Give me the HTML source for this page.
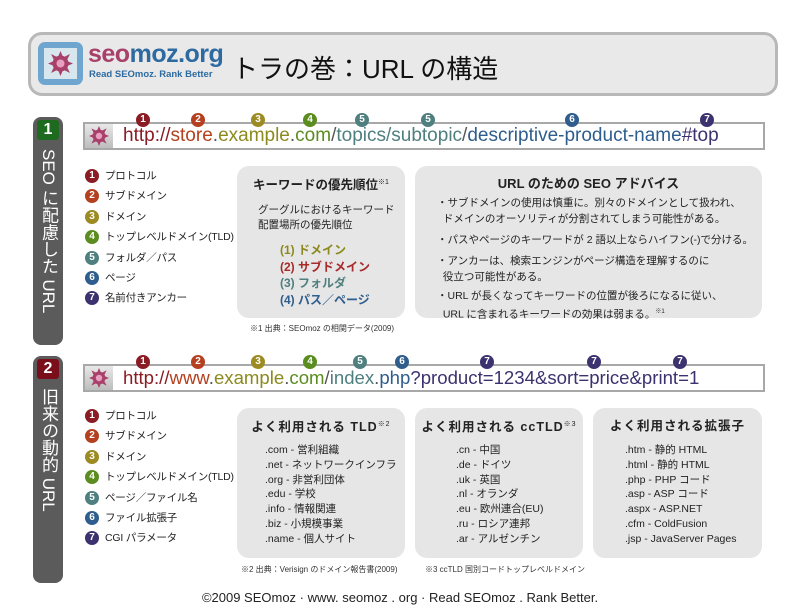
<!DOCTYPE html>
<html><head><meta charset="utf-8"><style>
*{margin:0;padding:0;box-sizing:border-box}
body{width:800px;height:610px;background:#fff;position:relative;overflow:hidden;font-family:"Liberation Sans","Noto Sans CJK JP",sans-serif;color:#222}
.a{position:absolute}
.hdr{left:28px;top:32px;width:750px;height:64px;border:3px solid #b8b8b8;border-radius:14px;background:#e9e9e9}
.logo{left:38px;top:42px;width:45px;height:43px;background:#6ea6cf;border-radius:7px}
.logo i{position:absolute;left:6px;top:6px;width:33px;height:31px;background:#d8e6ee}
.side{width:30px;border-radius:8px;background:#5b5b5b}
.badge{position:absolute;left:4px;top:3px;width:22px;height:20px;color:#fff;font-weight:bold;font-size:16px;text-align:center;line-height:20px;border-radius:3px}
.vt{position:absolute;left:5px;top:32px;writing-mode:vertical-rl;color:#fff;font-size:17px;line-height:20px}
.bar{left:83px;width:682px;height:28px;border:2px solid #a8a8a8;background:#fff}
.bar .ic{position:absolute;left:0;top:0;width:28px;height:24px;background:linear-gradient(#e8e8e8,#bdbdbd)}
.url{position:absolute;left:38px;top:0;font-size:19px;line-height:24px;white-space:nowrap;color:#555}
.n{position:absolute;width:14px;height:14px;border-radius:50%;color:#fff;font-size:10px;font-weight:bold;text-align:center;line-height:14px}
.c1{background:#8a1c24}.c2{background:#b4401f}.c3{background:#9c8a22}.c4{background:#5b8c1f}.c5{background:#4f7f7f}.c6{background:#2f5d8d}.c7{background:#3b326f}
.t1{color:#8a1c24}.t2{color:#b4401f}.t3{color:#8c8a1e}.t4{color:#5b8c1f}.t5{color:#4f7f7f}.t6{color:#2f5d8d}.t7{color:#3b326f}
.leg{left:85px;font-size:10.5px;letter-spacing:-0.2px}
.leg div{height:20.4px;position:relative;padding-left:20px;line-height:14px;white-space:nowrap}
.leg .n{left:0;top:0;letter-spacing:0}
.box{background:#e6e6e6;border-radius:12px}
.box h4{font-size:13px;text-align:center;font-weight:bold}
.fn{font-size:8px;color:#333}
.lst{font-size:10.5px;line-height:14.8px}
</style></head><body>
<div class="a hdr"></div>
<div class="a logo"><i></i><svg style="position:absolute;left:10px;top:9px" width="25" height="25" viewBox="0 0 25 25"><g fill="#a8406a"><circle cx="12.5" cy="12.5" r="8"/><path d="M12.5 0L15 6 10 6zM12.5 25L15 19 10 19zM0 12.5L6 10 6 15zM25 12.5L19 10 19 15zM3 3L9 6 6 9zM22 22L16 19 19 16zM22 3L19 9 16 6zM3 22L6 16 9 19z"/></g><circle cx="12.5" cy="12.5" r="4" fill="#e9a0c0"/></svg></div>
<div class="a" style="left:88px;top:40px;font-size:25px;font-weight:bold;color:#2d6aa0;letter-spacing:-0.5px"><span style="color:#a8406a">seo</span>moz.org</div>
<div class="a" style="left:89px;top:69px;font-size:9.5px;font-weight:bold;color:#2d6aa0">Read SEOmoz. Rank Better</div>
<div class="a" style="left:232px;top:49px;font-size:26px;color:#111">トラの巻：URL の構造</div>

<!-- section 1 -->
<div class="a side" style="left:33px;top:117px;height:228px"><div class="badge" style="background:#1e6a1e">1</div><div class="vt">SEO に配慮した URL</div></div>
<div class="a bar" style="top:122px"><div class="ic"></div><svg class="a" style="left:4px;top:2px" width="20" height="20" viewBox="0 0 25 25"><g fill="#a8406a"><circle cx="12.5" cy="12.5" r="8"/><path d="M12.5 0L15 6 10 6zM12.5 25L15 19 10 19zM0 12.5L6 10 6 15zM25 12.5L19 10 19 15zM3 3L9 6 6 9zM22 22L16 19 19 16zM22 3L19 9 16 6zM3 22L6 16 9 19z"/></g><circle cx="12.5" cy="12.5" r="4" fill="#e9a0c0"/></svg>
<div class="url"><span class="t1">http://</span><span class="t2">store</span>.<span class="t3">example</span>.<span class="t4">com</span>/<span class="t5">topics/subtopic</span>/<span class="t6">descriptive-product-name</span><span class="t7">#top</span></div></div>
<div class="n c1" style="left:136px;top:113px">1</div><div class="n c2" style="left:191px;top:113px">2</div><div class="n c3" style="left:251px;top:113px">3</div><div class="n c4" style="left:303px;top:113px">4</div><div class="n c5" style="left:355px;top:113px">5</div><div class="n c5" style="left:421px;top:113px">5</div><div class="n c6" style="left:565px;top:113px">6</div><div class="n c7" style="left:700px;top:113px">7</div>

<div class="a leg" style="top:169px">
<div><span class="n c1">1</span>プロトコル</div><div><span class="n c2">2</span>サブドメイン</div><div><span class="n c3">3</span>ドメイン</div><div><span class="n c4">4</span>トップレベルドメイン(TLD)</div><div><span class="n c5">5</span>フォルダ／パス</div><div><span class="n c6">6</span>ページ</div><div><span class="n c7">7</span>名前付きアンカー</div></div>

<div class="a box" style="left:237px;top:166px;width:168px;height:152px">
<h4 style="margin-top:8px;font-size:12.5px">キーワードの優先順位<sup style="font-size:7px;font-weight:normal">※1</sup></h4>
<div style="margin:10px 0 0 21px;font-size:10.5px;line-height:15px">グーグルにおけるキーワード<br>配置場所の優先順位</div>
<div style="margin:9px 0 0 43px;font-size:12px;font-weight:bold;line-height:16.5px"><div class="t3">(1) ドメイン</div><div class="t1" style="color:#a82a2a">(2) サブドメイン</div><div class="t5">(3) フォルダ</div><div class="t6">(4) パス／ページ</div></div></div>
<div class="a fn" style="left:250px;top:323px">※1 出典：SEOmoz の相関データ(2009)</div>

<div class="a box" style="left:415px;top:166px;width:347px;height:152px">
<h4 style="margin-top:7px">URL のための SEO アドバイス</h4>
<div style="margin:3px 0 0 22px;font-size:10.5px;line-height:16px">
<div>・サブドメインの使用は慎重に。別々のドメインとして扱われ、<br>&nbsp;&nbsp;ドメインのオーソリティが分割されてしまう可能性がある。</div>
<div style="margin-top:5px">・パスやページのキーワードが 2 語以上ならハイフン(-)で分ける。</div>
<div style="margin-top:5px">・アンカーは、検索エンジンがページ構造を理解するのに<br>&nbsp;&nbsp;役立つ可能性がある。</div>
<div style="margin-top:3px">・URL が長くなってキーワードの位置が後ろになるに従い、<br>&nbsp;&nbsp;URL に含まれるキーワードの効果は弱まる。<sup style="font-size:6px">※1</sup></div></div></div>

<!-- section 2 -->
<div class="a side" style="left:33px;top:356px;height:227px"><div class="badge" style="background:#7a0e1a">2</div><div class="vt">旧来の動的 URL</div></div>
<div class="a bar" style="top:364px"><div class="ic"></div><svg class="a" style="left:4px;top:2px" width="20" height="20" viewBox="0 0 25 25"><g fill="#a8406a"><circle cx="12.5" cy="12.5" r="8"/><path d="M12.5 0L15 6 10 6zM12.5 25L15 19 10 19zM0 12.5L6 10 6 15zM25 12.5L19 10 19 15zM3 3L9 6 6 9zM22 22L16 19 19 16zM22 3L19 9 16 6zM3 22L6 16 9 19z"/></g><circle cx="12.5" cy="12.5" r="4" fill="#e9a0c0"/></svg>
<div class="url" style="font-size:18.6px"><span class="t1">http://</span><span class="t2">www</span>.<span class="t3">example</span>.<span class="t4">com</span>/<span class="t5">index</span>.<span class="t6">php</span><span class="t7">?product=1234&amp;sort=price&amp;print=1</span></div></div>
<div class="n c1" style="left:136px;top:355px">1</div><div class="n c2" style="left:191px;top:355px">2</div><div class="n c3" style="left:251px;top:355px">3</div><div class="n c4" style="left:303px;top:355px">4</div><div class="n c5" style="left:353px;top:355px">5</div><div class="n c6" style="left:395px;top:355px">6</div><div class="n c7" style="left:480px;top:355px">7</div><div class="n c7" style="left:587px;top:355px">7</div><div class="n c7" style="left:673px;top:355px">7</div>

<div class="a leg" style="top:409px">
<div><span class="n c1">1</span>プロトコル</div><div><span class="n c2">2</span>サブドメイン</div><div><span class="n c3">3</span>ドメイン</div><div><span class="n c4">4</span>トップレベルドメイン(TLD)</div><div><span class="n c5">5</span>ページ／ファイル名</div><div><span class="n c6">6</span>ファイル拡張子</div><div><span class="n c7">7</span>CGI パラメータ</div></div>

<div class="a box" style="left:237px;top:408px;width:168px;height:150px">
<h4 style="margin-top:8px;font-size:12.5px;letter-spacing:1px">よく利用される TLD<sup style="font-size:7px;font-weight:normal">※2</sup></h4>
<div class="lst" style="margin:8px 0 0 28px">.com - 営利組織<br>.net - ネットワークインフラ<br>.org - 非営利団体<br>.edu - 学校<br>.info - 情報関連<br>.biz - 小規模事業<br>.name - 個人サイト</div></div>
<div class="a fn" style="left:241px;top:564px">※2 出典：Verisign のドメイン報告書(2009)</div>

<div class="a box" style="left:415px;top:408px;width:168px;height:150px">
<h4 style="margin-top:8px;font-size:12.5px;letter-spacing:1px">よく利用される ccTLD<sup style="font-size:7px;font-weight:normal">※3</sup></h4>
<div class="lst" style="margin:8px 0 0 41px">.cn - 中国<br>.de - ドイツ<br>.uk - 英国<br>.nl - オランダ<br>.eu - 欧州連合(EU)<br>.ru - ロシア連邦<br>.ar - アルゼンチン</div></div>
<div class="a fn" style="left:425px;top:564px">※3 ccTLD 国別コードトップレベルドメイン</div>

<div class="a box" style="left:593px;top:408px;width:169px;height:150px">
<h4 style="margin-top:7px;font-size:12.5px;letter-spacing:1px">よく利用される拡張子</h4>
<div class="lst" style="margin:9px 0 0 32px">.htm - 静的 HTML<br>.html - 静的 HTML<br>.php - PHP コード<br>.asp - ASP コード<br>.aspx - ASP.NET<br>.cfm - ColdFusion<br>.jsp - JavaServer Pages</div></div>

<div class="a" style="left:0;width:800px;top:590px;text-align:center;font-size:13px;color:#222">©2009 SEOmoz · www. seomoz . org · Read SEOmoz . Rank Better.</div>
</body></html>
